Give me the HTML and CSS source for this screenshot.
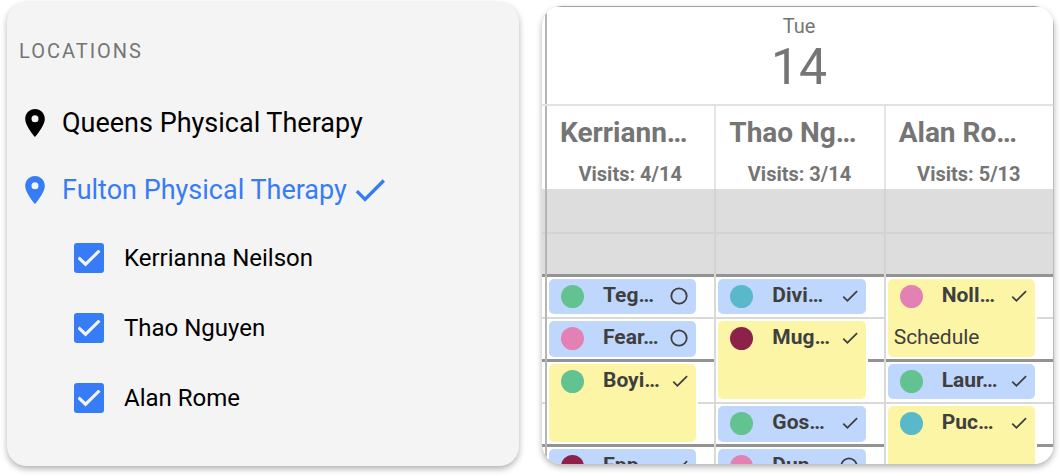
FILE: index.html
```html
<!DOCTYPE html>
<html lang="en">
<head>
    <meta charset="UTF-8">
    <meta name="viewport" content="width=device-width, initial-scale=1">
    <title>Schedule</title>
    <link rel="stylesheet" href="styles.css">
</head>
<body>
    <svg class="sprite" aria-hidden="true">
        <symbol id="pin" viewBox="5 2 14 20">
            <path d="M12 2C8.13 2 5 5.13 5 9c0 5.25 7 13 7 13s7-7.75 7-13c0-3.87-3.13-7-7-7zm0 9.5a2.5 2.5 0 1 1 0-5 2.5 2.5 0 0 1 0 5z"/>
        </symbol>
        <symbol id="check" viewBox="3 5 18 14">
            <path d="M9 16.17L4.83 12l-1.42 1.41L9 19 21 7l-1.41-1.41z"/>
        </symbol>
        <symbol id="circle" viewBox="0 0 18 18">
            <circle cx="9" cy="9" r="7.7" fill="none" stroke="currentColor" stroke-width="1.8"/>
        </symbol>
    </svg>

    <aside class="card locations">
        <h2 class="title">LOCATIONS</h2>
        <button class="location" type="button">
            <svg class="pin"><use href="#pin"/></svg>
            <span>Queens Physical Therapy</span>
        </button>
        <button class="location selected" type="button">
            <svg class="pin"><use href="#pin"/></svg>
            <span>Fulton Physical Therapy</span>
            <svg class="tick"><use href="#check"/></svg>
        </button>
        <div class="therapists">
            <label class="therapist"><input type="checkbox" checked><span>Kerrianna Neilson</span></label>
            <label class="therapist"><input type="checkbox" checked><span>Thao Nguyen</span></label>
            <label class="therapist"><input type="checkbox" checked><span>Alan Rome</span></label>
        </div>
    </aside>

    <main class="card schedule">
        <header class="day">
            <div class="weekday">Tue</div>
            <div class="date">14</div>
        </header>
        <div class="columns heads">
            <div class="head">
                <h3>Kerriann…</h3>
                <p>Visits: 4/14</p>
            </div>
            <div class="head">
                <h3>Thao Ng…</h3>
                <p>Visits: 3/14</p>
            </div>
            <div class="head">
                <h3>Alan Ro…</h3>
                <p>Visits: 5/13</p>
            </div>
        </div>
        <div class="columns closed">
            <div></div>
            <div></div>
            <div></div>
        </div>
        <div class="columns slots">
            <div class="slot-column">
                <div class="event blue">
                    <div class="event-head">
                        <i class="dot green"></i><b>Teg…</b><svg class="open"><use href="#circle"/></svg>
                    </div>
                </div>
                <div class="event blue">
                    <div class="event-head">
                        <i class="dot pink"></i><b>Fear…</b><svg class="open"><use href="#circle"/></svg>
                    </div>
                </div>
                <div class="event yellow long">
                    <div class="event-head">
                        <i class="dot green"></i><b>Boyi…</b><svg class="done"><use href="#check"/></svg>
                    </div>
                </div>
                <div class="event blue">
                    <div class="event-head">
                        <i class="dot wine"></i><b>Epp…</b><svg class="done"><use href="#check"/></svg>
                    </div>
                </div>
            </div>
            <div class="slot-column">
                <div class="event blue">
                    <div class="event-head">
                        <i class="dot teal"></i><b>Divi…</b><svg class="done"><use href="#check"/></svg>
                    </div>
                </div>
                <div class="event yellow long">
                    <div class="event-head">
                        <i class="dot wine"></i><b>Mug…</b><svg class="done"><use href="#check"/></svg>
                    </div>
                </div>
                <div class="event blue">
                    <div class="event-head">
                        <i class="dot green"></i><b>Gos…</b><svg class="done"><use href="#check"/></svg>
                    </div>
                </div>
                <div class="event blue">
                    <div class="event-head">
                        <i class="dot pink"></i><b>Dun…</b><svg class="open"><use href="#circle"/></svg>
                    </div>
                </div>
            </div>
            <div class="slot-column">
                <div class="event yellow long">
                    <div class="event-head">
                        <i class="dot pink"></i><b>Noll…</b><svg class="done"><use href="#check"/></svg>
                    </div>
                    <p class="note">Schedule</p>
                </div>
                <div class="event blue">
                    <div class="event-head">
                        <i class="dot green"></i><b>Laur…</b><svg class="done"><use href="#check"/></svg>
                    </div>
                </div>
                <div class="event yellow long">
                    <div class="event-head">
                        <i class="dot teal"></i><b>Puc…</b><svg class="done"><use href="#check"/></svg>
                    </div>
                </div>
            </div>
        </div>
    </main>
</body>
</html>
```
FILE: styles.css
```css
*{
    box-sizing: border-box;
}
body{
    display: grid;
    grid-template-columns: minmax(0, 1fr) minmax(0, 1fr);
    grid-template-rows: minmax(0, 1fr);
    gap: 23px;
    height: 100vh;
    margin: 0;
    padding: 2px 6px 10px 7px;
    background-color: #fff;
    font-family: Roboto, "Liberation Sans", sans-serif;
    color: #000;
}
h2, h3, p{
    margin: 0;
}
svg{
    flex: none;
    fill: currentColor;
}
.sprite{
    position: absolute;
    width: 0;
    height: 0;
}
.card{
    border-radius: 20px;
    box-shadow: 0 3px 6px rgba(0, 0, 0, 0.3);
    overflow: hidden;
}

/* locations */
.locations{
    padding: 37px 12px 0;
    background-color: #f4f4f4;
}
.title{
    margin-bottom: 26px;
    font-size: 20px;
    line-height: 24px;
    font-weight: 400;
    letter-spacing: 2px;
    color: #757575;
}
.location{
    display: flex;
    align-items: center;
    width: 100%;
    height: 67px;
    padding: 0 6px;
    border: none;
    background: none;
    font-family: inherit;
    font-size: 27px;
    color: inherit;
    text-align: left;
    cursor: pointer;
}
.selected{
    color: #367cf7;
}
.pin{
    width: 20px;
    height: 28px;
    margin-right: 17px;
}
.tick{
    width: 30px;
    height: 24px;
    margin-left: 8px;
}
.therapists{
    padding-left: 55px;
}
.therapist{
    display: flex;
    align-items: center;
    gap: 20px;
    height: 70px;
    font-size: 24px;
}
.therapist input{
    display: grid;
    place-items: center;
    appearance: none;
    width: 30px;
    height: 30px;
    margin: 0;
    border-radius: 3px;
    background-color: #bbb;
}
.therapist input:checked{
    background-color: #367cf7;
}
.therapist input:checked::before{
    content: "";
    width: 23px;
    height: 17px;
    background-color: #f4f4f4;
    clip-path: polygon(0 55%, 9% 41%, 35% 74%, 91% 0, 100% 13%, 35% 100%);
}

/* schedule */
.schedule{
    display: flex;
    flex-direction: column;
    margin: 4px 0 2px;
    background-color: #fff;
    color: #757575;
}
.day{
    flex: none;
    height: 100px;
    padding: 7px 0 0 3px;
    background: linear-gradient(#b5b5b5, #b5b5b5) 3px 0 / 2px 100% no-repeat;
    border-top: 1px solid #a0a0a0;
    border-right: 1px solid #bbb;
    border-bottom: 2px solid #e2e2e2;
    text-align: center;
}
.weekday{
    font-size: 20px;
    line-height: 24px;
}
.date{
    font-size: 50px;
    line-height: 58px;
}
.columns{
    display: grid;
    grid-template-columns: repeat(3, minmax(0, 1fr));
    flex: none;
    padding-left: 3px;
    border-right: 1px solid #bbb;
}
.columns > div{
    border-left: 2px solid #d9d9d9;
}
.heads > div{
    border-left-color: #e4e4ea;
}
.columns > div:first-child{
    border-left-color: #b5b5b5;
}
.head{
    height: 83px;
    padding: 11px 14px 0 13px;
    white-space: nowrap;
}
.head h3{
    font-size: 28px;
    line-height: 32px;
    font-weight: 700;
}
.head p{
    margin-top: 13px;
    font-size: 20px;
    line-height: 24px;
    font-weight: 700;
    text-align: center;
}
.closed{
    height: 85px;
    background: linear-gradient(#d3d3d3, #d3d3d3) 0 43px / 100% 2px no-repeat #ddd;
}
.closed > div{
    border-left-color: #d3d3d3;
}
.slots{
    flex: 1;
    /* one hour: dark line on the hour, light line on the half */
    background: linear-gradient(#939393 3px, transparent 3px, transparent 43px, #d9d9d9 43px, #d9d9d9 45px, transparent 45px) 0 0 / 100% 85px;
}
.slot-column{
    display: grid;
    grid-auto-rows: 42px 43px;
    min-width: 0;
}
.event{
    margin: 5px 18px 2px 2px;
    border-radius: 5px;
    box-shadow: 0 0 0 2px #fff;
    color: #3f3f3f;
}
.long{
    grid-row-end: span 2;
}
.blue{
    background-color: #bfd7fc;
}
.yellow{
    background-color: #fcf5a6;
}
.event-head{
    display: flex;
    align-items: center;
    height: 34px;
    padding: 0 8px 0 12px;
    font-size: 21px;
    line-height: 24px;
}
.event-head b{
    flex: 1;
    margin-left: 19px;
    padding-bottom: 2px;
}
.dot{
    width: 23px;
    height: 23px;
    border-radius: 50%;
}
.green{
    background-color: #62c290;
}
.pink{
    background-color: #e381b5;
}
.wine{
    background-color: #8c2249;
}
.teal{
    background-color: #59b8ca;
}
.open{
    width: 18px;
    height: 18px;
}
.done{
    width: 16px;
    height: 12px;
}
.note{
    margin: 12px 6px 0;
    font-size: 21px;
    line-height: 24px;
}
```
